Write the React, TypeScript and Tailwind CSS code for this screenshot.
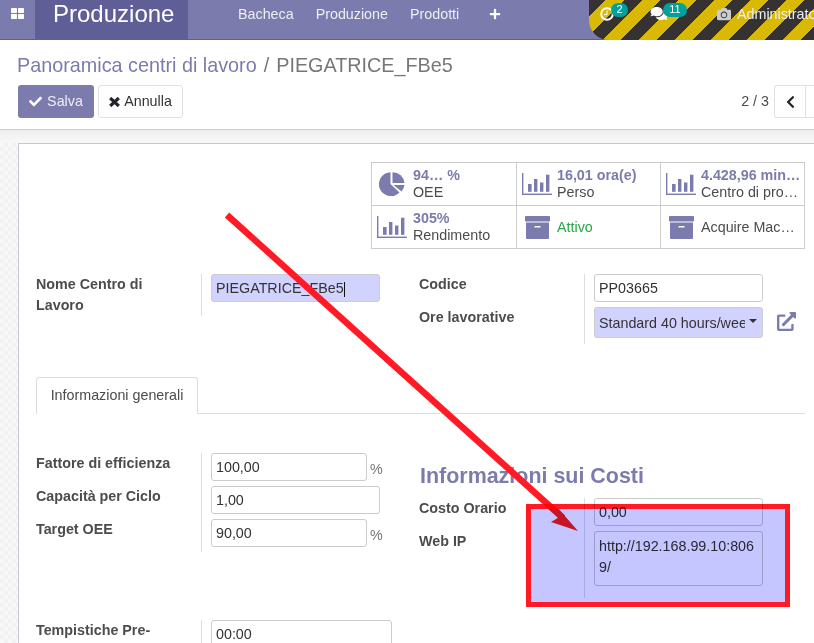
import React from "react";
import { FaCheck, FaChevronLeft, FaPlus, FaComments, FaCamera, FaExternalLinkAlt } from "react-icons/fa";

function PieIcon() {
  return (
    <svg width="26" height="24" viewBox="0 0 26 24" fill="#7c7bad">
      <path d="M11.5 0.2A12 12 0 1 0 20.5 20.6L11.5 12Z" />
      <path d="M13.5 0.2A12 12 0 0 1 25.5 11L13.5 11Z" />
      <path d="M14.5 13L25.5 13A12 12 0 0 1 22.5 19.5Z" />
    </svg>
  );
}

function ChartIcon() {
  return (
    <svg width="30" height="22" viewBox="0 0 30 22" fill="#7c7bad">
      <rect x="0" y="0" width="1.4" height="22" />
      <rect x="0" y="20.6" width="30" height="1.4" />
      <rect x="6" y="11" width="3.6" height="7.8" />
      <rect x="12" y="6" width="3.4" height="12.8" />
      <rect x="18" y="9.5" width="3.4" height="9.3" />
      <rect x="24" y="1.7" width="3.4" height="17.1" />
    </svg>
  );
}

function ArchiveIcon() {
  return (
    <svg width="25" height="23" viewBox="0 0 25 23" fill="#7c7bad">
      <rect x="0" y="0" width="25" height="5.6" rx="0.8" />
      <path fillRule="evenodd" d="M1 6.6H24V22a1 1 0 0 1-1 1H2a1 1 0 0 1-1-1ZM9.5 10v1.5H15.5V10Z" />
    </svg>
  );
}

function AppsIcon() {
  return (
    <svg width="13" height="11" viewBox="0 0 13 11" fill="#fff">
      <rect x="0" y="0" width="6" height="5" rx="0.7" />
      <rect x="7" y="0" width="6" height="5" rx="0.7" />
      <rect x="0" y="6" width="6" height="5" rx="0.7" />
      <rect x="7" y="6" width="6" height="5" rx="0.7" />
    </svg>
  );
}

function ClockIcon() {
  return (
    <svg width="14" height="14" viewBox="0 0 14 14" fill="none" stroke="#fff">
      <circle cx="7" cy="7" r="5.8" strokeWidth="2" />
      <path d="M7 3.5V7.6H4" strokeWidth="1" />
    </svg>
  );
}

function CloseIcon() {
  return (
    <svg width="11" height="10" viewBox="0 0 11 10" fill="none" stroke="#212529" strokeWidth="3.2">
      <path d="M1.2 1L9.8 9M9.8 1L1.2 9" />
    </svg>
  );
}

function Stat({ icon, top, bottom, green, border, h, tight }: { icon: React.ReactNode; top?: string; bottom: string; green?: boolean; border: string; h: string; tight?: boolean }) {
  return (
    <div className={`flex items-center ${h} ${border} border-[#ccc] overflow-hidden`}>
      <div className="w-[40px] shrink-0 flex justify-center">{icon}</div>
      <div className={`leading-[17px] whitespace-nowrap ${tight ? "" : "ml-px"}`}>
        {top && <div className="font-bold text-[#7c7bad]">{top}</div>}
        <div className={green ? "text-[#28a745]" : "text-[#4c4c4c]"}>{bottom}</div>
      </div>
    </div>
  );
}

function Field({ children, w = "w-[169px]", bg = "bg-white", h = "h-[28px]" }: { children: React.ReactNode; w?: string; bg?: string; h?: string }) {
  return <div className={`${w} ${h} ${bg} border border-[#ccc] rounded-[3px] pl-[4px] pr-[5px] pt-[2px] flex items-center text-[#333] whitespace-nowrap overflow-hidden`}>{children}</div>;
}

function Label({ children }: { children: React.ReactNode }) {
  return <div className="h-[33px] font-bold text-[#4c4c4c] leading-[21px]">{children}</div>;
}

export default function App() {
  return (
    <div className="relative w-[814px] h-[643px] overflow-hidden bg-white text-[14.3px] flex flex-col" style={{ fontFamily: '"Liberation Sans", Arial, sans-serif' }}>
      <nav className="h-[40px] shrink-0 bg-[#7c7bad] border-b border-[#5f5e97] flex text-white">
        <div className="w-[35px] flex items-start justify-center pt-[8px]"><AppsIcon /></div>
        <div className="w-[153px] bg-[#5f5e97] pl-[18px] text-[24px] leading-[28px]">Produzione</div>
        <div className="flex ml-[50px] gap-[22px] pt-[6px] leading-[17px] text-[#eeeef5]">
          <span>Bacheca</span>
          <span>Produzione</span>
          <span>Prodotti</span>
          <FaPlus className="w-[12px] h-[12px] ml-[8px] mt-[2px] text-white" />
        </div>
        <div className="ml-auto w-[225px] h-[40px] rounded-bl-[20px] relative overflow-hidden bg-[repeating-linear-gradient(135deg,#363232_0px,#363232_12px,#d9b904_12px,#d9b904_24.75px,#363232_24.75px,#363232_25.5px)]">
          <div className="absolute left-[11px] top-[7px]"><ClockIcon /></div>
          <span className="absolute left-[22px] top-[3px] w-[17px] h-[14px] rounded-full bg-[#00a09d] text-[11px] leading-[13px] text-center">2</span>
          <FaComments className="absolute left-[61px] top-[6px] w-[18px] h-[15px]" />
          <span className="absolute left-[74px] top-[3px] w-[24px] h-[14px] rounded-full bg-[#00a09d] text-[11px] leading-[13px] text-center">11</span>
          <FaCamera className="absolute left-[127px] top-[7px] w-[16px] h-[14px] text-[#ccc]" />
          <span className="absolute left-[148px] top-[6px] leading-[17px] text-[#eeeef5] whitespace-nowrap">Administrator</span>
        </div>
      </nav>

      <header className="h-[90px] shrink-0 bg-white border-b border-[#ccc] pl-[18px]">
        <div className="h-[45px] pt-[13px] -ml-px text-[19.8px] leading-[24px] text-[#777] whitespace-nowrap">
          <span className="text-[#7c7bad]">Panoramica centri di lavoro</span>
          <span className="mx-[7px]">/</span>
          <span>PIEGATRICE_FBe5</span>
        </div>
        <div className="flex items-start">
          <button className="h-[33px] w-[76px] rounded-[3px] bg-[#7c7bad] text-[#eeeef5] flex items-center justify-center gap-[5px]">
            <FaCheck className="w-[13px] h-[13px] text-white" /> Salva
          </button>
          <button className="h-[33px] w-[85px] ml-[4px] rounded-[3px] bg-white border border-[#dee2e6] text-[#333] flex items-center justify-center gap-[4px]">
            <CloseIcon /> Annulla
          </button>
          <div className="ml-auto flex items-center">
            <span className="text-[#4c4c4c] mr-[5px]">2 / 3</span>
            <div className="w-[40px] h-[33px] bg-white border border-[#dee2e6] border-r-0 rounded-l-[3px] flex">
              <div className="w-[31px] h-full border-r border-[#dee2e6] flex items-center justify-center"><FaChevronLeft className="w-[11px] h-[14px] text-[#212529]" /></div>
            </div>
          </div>
        </div>
      </header>

      <div className="h-[13px] shrink-0 bg-gradient-to-b from-[#efefef] to-[#f8f8f8]" />

      <main className="flex-1 min-h-0 flex">
        <div className="w-[18px] shrink-0 bg-[#f5f5f5] bg-[repeating-conic-gradient(#f1f1f1_0_25%,#f8f8f8_0_50%)] bg-[length:8px_8px]" />
        <section className="flex-1 min-w-0 bg-white border-l border-t border-[#c9c9d6] pl-[17px] pr-[9px] pt-[18px]">
          <div className="ml-[335px] w-[434px] h-[87px] border border-[#ccc] grid grid-cols-[145px_144px_143px]">
            <Stat h="h-[43px]" border="border-r border-b" icon={<PieIcon />} top="94… %" bottom="OEE" />
            <Stat h="h-[43px]" border="border-r border-b" icon={<ChartIcon />} top="16,01 ora(e)" bottom="Perso" tight />
            <Stat h="h-[43px]" border="border-b" icon={<ChartIcon />} top="4.428,96 min…" bottom="Centro di pro…" tight />
            <Stat h="h-[42px]" border="border-r" icon={<ChartIcon />} top="305%" bottom="Rendimento" />
            <Stat h="h-[42px]" border="border-r" icon={<ArchiveIcon />} bottom="Attivo" green tight />
            <Stat h="h-[42px]" border="" icon={<ArchiveIcon />} bottom="Acquire Mac…" tight />
          </div>

          <div className="flex mt-[25px] h-[103px] text-[#333]">
            <div className="w-[165px] font-bold text-[#4c4c4c] leading-[21px]">Nome Centro di<br />Lavoro</div>
            <div className="w-[218px] h-[42px] border-l border-[#ddd] pl-[9px]">
              <Field bg="bg-[#d2d2ff]"><span>PIEGATRICE_FBe5</span><span className="w-px h-[15px] bg-[#111]" /></Field>
            </div>
            <div className="w-[165px]">
              <Label>Codice</Label>
              <Label>Ore lavorative</Label>
            </div>
            <div className="h-[70px] border-l border-[#ddd] pl-[9px] flex flex-col gap-[5px]">
              <Field>PP03665</Field>
              <div className="flex">
                <Field bg="bg-[#d2d2ff]" h="h-[31px]">
                  <span className="w-[146px] shrink-0 overflow-hidden">Standard 40 hours/week</span>
                  <span className="ml-[4px] border-x-[4px] border-x-transparent border-t-[4px] border-t-[#333] -mt-[5px]" />
                </Field>
                <FaExternalLinkAlt className="w-[21px] h-[19px] ml-[13px] mt-[5px] text-[#7c7bad]" />
              </div>
            </div>
          </div>

          <div className="h-[37px] border-b border-[#ddd] flex">
            <div className="w-[162px] h-[37px] bg-white border border-b-0 border-[#ddd] rounded-t-[3px] text-center leading-[35px] text-[#4c4c4c]">Informazioni generali</div>
          </div>

          <div className="flex mt-[39px] h-[167px]">
            <div className="w-[165px]">
              <Label>Fattore di efficienza</Label>
              <Label>Capacità per Ciclo</Label>
              <Label>Target OEE</Label>
            </div>
            <div className="w-[218px] h-[99px] border-l border-[#ddd] pl-[9px] flex flex-col gap-[5px] text-[#333]">
              <div className="flex"><Field w="w-[156px]">100,00</Field><span className="ml-[3px] mt-[6px] text-[#777]">%</span></div>
              <Field>1,00</Field>
              <div className="flex"><Field w="w-[156px]">90,00</Field><span className="ml-[3px] mt-[6px] text-[#777]">%</span></div>
            </div>
            <div className="flex-1">
              <h2 className="ml-px mt-[9px] h-[36px] text-[21.45px] leading-[28px] font-bold text-[#7c7bad] whitespace-nowrap">Informazioni sui Costi</h2>
              <div className="flex">
                <div className="w-[165px]">
                  <Label>Costo Orario</Label>
                  <Label>Web IP</Label>
                </div>
                <div className="h-[100px] border-l border-[#ddd] pl-[9px] flex flex-col gap-[5px] text-[#333]">
                  <Field>0,00</Field>
                  <div className="w-[169px] h-[55px] border border-[#ccc] rounded-[3px] pl-[4px] pr-[5px] pt-[4px] leading-[21px] break-all">http://192.168.99.10:8069/</div>
                </div>
              </div>
            </div>
          </div>

          <div className="flex">
            <div className="w-[165px] font-bold text-[#4c4c4c] leading-[21px]">Tempistiche Pre-</div>
            <div className="border-l border-[#ddd] pl-[9px] text-[#333]"><Field w="w-[181px]">00:00</Field></div>
          </div>
        </section>
      </main>

      <svg className="absolute left-0 top-0 pointer-events-none" width="814" height="643" viewBox="0 0 814 643">
        <line x1="227" y1="215" x2="563" y2="518" stroke="#ff1a26" strokeWidth="6.5" />
        <polygon points="578,531 551,522 561,516 557,507" fill="#ff1a26" />
      </svg>
      <div className="absolute left-[526px] top-[504px] w-[264px] h-[103px] border-[5px] border-[#ff1a26] bg-[#c5c5ff] mix-blend-multiply" />
    </div>
  );
}
